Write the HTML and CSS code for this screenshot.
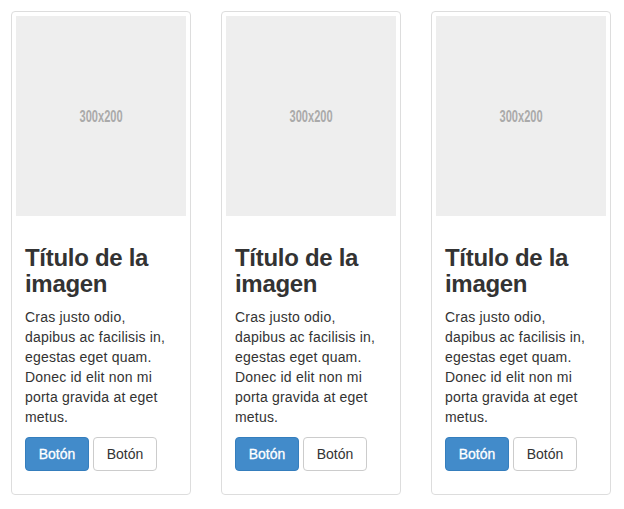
FILE: index.html
```html
<!DOCTYPE html>
<html lang="es">
<head>
<meta charset="utf-8">
<title>Thumbnails</title>
<link rel="stylesheet" href="styles.css">
</head>
<body>
<div class="row">
  <div class="thumbnail">
    <div class="holder"><span class="holder-text">300x200</span></div>
    <div class="caption">
      <h3>Título de la imagen</h3>
      <p>Cras justo odio, dapibus ac facilisis in, egestas eget quam. Donec id elit non mi porta gravida at eget metus.</p>
      <p class="actions"><a href="#" class="btn btn-primary">Botón</a><a href="#" class="btn btn-default">Botón</a></p>
    </div>
  </div>
  <div class="thumbnail">
    <div class="holder"><span class="holder-text">300x200</span></div>
    <div class="caption">
      <h3>Título de la imagen</h3>
      <p>Cras justo odio, dapibus ac facilisis in, egestas eget quam. Donec id elit non mi porta gravida at eget metus.</p>
      <p class="actions"><a href="#" class="btn btn-primary">Botón</a><a href="#" class="btn btn-default">Botón</a></p>
    </div>
  </div>
  <div class="thumbnail">
    <div class="holder"><span class="holder-text">300x200</span></div>
    <div class="caption">
      <h3>Título de la imagen</h3>
      <p>Cras justo odio, dapibus ac facilisis in, egestas eget quam. Donec id elit non mi porta gravida at eget metus.</p>
      <p class="actions"><a href="#" class="btn btn-primary">Botón</a><a href="#" class="btn btn-default">Botón</a></p>
    </div>
  </div>
</div>
</body>
</html>
```

FILE: styles.css
```css
* { box-sizing: border-box; }
html, body { margin: 0; padding: 0; background: #fff; }
body {
  font-family: "Liberation Sans", Arial, sans-serif;
  font-size: 14px;
  line-height: 20px;
  color: #333;
}
.row {
  display: flex;
  gap: 30px;
  padding: 11px 0 0 11px;
  align-items: flex-start;
}
.thumbnail {
  width: 180px;
  padding: 4px;
  border: 1px solid #ddd;
  border-radius: 4px;
  background: #fff;
}
.holder {
  height: 200px;
  background: #eee;
  display: flex;
  align-items: center;
  justify-content: center;
}
.holder-text {
  display: inline-block;
  font-weight: bold;
  font-size: 17px;
  line-height: 17px;
  color: #aaa;
  transform: scaleX(0.65);
}
.caption {
  padding: 9px;
}
.caption h3 {
  margin: 20px 0 10px;
  font-size: 24px;
  line-height: 26px;
  font-weight: bold;
  letter-spacing: -0.3px;
  color: #333;
}
.caption p {
  margin: 0 0 10px;
  letter-spacing: 0.2px;
}
.caption p.actions {
  display: flex;
  gap: 4px;
  letter-spacing: 0;
}
.btn {
  display: inline-block;
  height: 34px;
  padding: 6px 0;
  font-size: 14px;
  line-height: 20px;
  border: 1px solid transparent;
  border-radius: 4px;
  text-decoration: none;
  text-align: center;
  width: 64px;
}
.btn-primary {
  background: #428bca;
  border-color: #357ebd;
  color: #fff;
  -webkit-text-stroke: 0.3px #fff;
}
.btn-default {
  background: #fff;
  border-color: #ccc;
  color: #333;
}
```
